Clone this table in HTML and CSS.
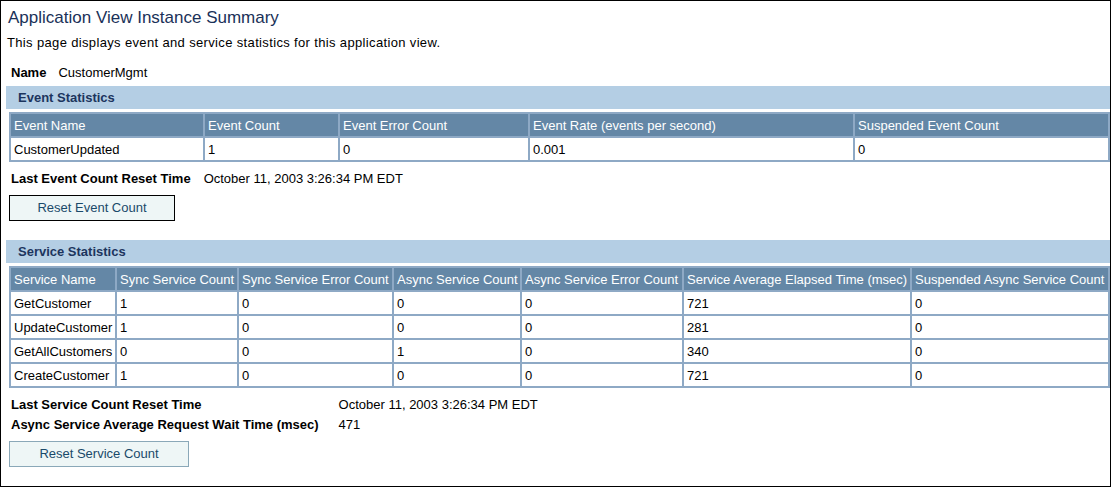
FILE: index.html
```html
<!DOCTYPE html>
<html lang="en">
<head>
<meta charset="utf-8">
<title>Application View Instance Summary</title>
<link rel="stylesheet" href="styles.css">
</head>
<body>
<div class="frame">
  <h1 class="title">Application View Instance Summary</h1>
  <p class="intro">This page displays event and service statistics for this application view.</p>
  <div class="meta name-row">
    <span class="label">Name</span><span class="value">CustomerMgmt</span>
  </div>

  <div class="band">Event Statistics</div>
  <table class="stats">
    <colgroup>
      <col class="c-ev-name"><col class="c-ev-count"><col class="c-ev-err"><col class="c-ev-rate"><col>
    </colgroup>
    <thead>
      <tr><th>Event Name</th><th>Event Count</th><th>Event Error Count</th><th>Event Rate (events per second)</th><th>Suspended Event Count</th></tr>
    </thead>
    <tbody>
      <tr><td>CustomerUpdated</td><td>1</td><td>0</td><td>0.001</td><td>0</td></tr>
    </tbody>
  </table>
  <div class="meta ev-meta">
    <span class="label">Last Event Count Reset Time</span><span class="value">October 11, 2003 3:26:34 PM EDT</span>
  </div>
  <button class="btn btn-default" type="button">Reset Event Count</button>

  <div class="band band-2">Service Statistics</div>
  <table class="stats">
    <colgroup>
      <col class="c-sv-name"><col class="c-sv-sync"><col class="c-sv-syncerr"><col class="c-sv-async"><col class="c-sv-asyncerr"><col class="c-sv-avg"><col>
    </colgroup>
    <thead>
      <tr><th>Service Name</th><th>Sync Service Count</th><th>Sync Service Error Count</th><th>Async Service Count</th><th>Async Service Error Count</th><th>Service Average Elapsed Time (msec)</th><th>Suspended Async Service Count</th></tr>
    </thead>
    <tbody>
      <tr><td>GetCustomer</td><td>1</td><td>0</td><td>0</td><td>0</td><td>721</td><td>0</td></tr>
      <tr><td>UpdateCustomer</td><td>1</td><td>0</td><td>0</td><td>0</td><td>281</td><td>0</td></tr>
      <tr><td>GetAllCustomers</td><td>0</td><td>0</td><td>1</td><td>0</td><td>340</td><td>0</td></tr>
      <tr><td>CreateCustomer</td><td>1</td><td>0</td><td>0</td><td>0</td><td>721</td><td>0</td></tr>
    </tbody>
  </table>
  <div class="meta sv-meta">
    <span class="label">Last Service Count Reset Time</span><span class="value">October 11, 2003 3:26:34 PM EDT</span>
    <span class="label">Async Service Average Request Wait Time (msec)</span><span class="value">471</span>
  </div>
  <button class="btn btn-plain" type="button">Reset Service Count</button>
</div>
</body>
</html>
```
FILE: styles.css
```css
* { box-sizing: border-box; }
html, body { margin: 0; padding: 0; background: #fff; }
body {
  font-family: "Liberation Sans", Arial, sans-serif;
  font-size: 13px;
  color: #000;
}
.frame {
  width: 1111px;
  height: 487px;
  border: 1px solid #000;
  padding: 7px 0 0 5px;
  display: flex;
  flex-direction: column;
  align-items: flex-start;
}
.title {
  margin: 0;
  padding-left: 2px;
  font-size: 17px;
  line-height: 20px;
  font-weight: normal;
  color: #1a3158;
}
.intro {
  margin: 5px 0 0;
  padding-left: 1px;
  line-height: 20px;
  font-size: 13px;
  letter-spacing: 0.35px;
}
.meta {
  display: grid;
  grid-template-columns: auto auto;
  column-gap: 13px;
  padding-left: 5px;
  line-height: 20px;
  font-size: 13px;
}
.meta .label { font-weight: bold; }
.name-row { margin-top: 10px; column-gap: 12px; }
.band {
  align-self: stretch;
  margin-top: 3px;
  height: 23px;
  line-height: 23px;
  padding-left: 12px;
  background: #b4cee4;
  color: #1c355e;
  font-weight: bold;
  font-size: 13px;
}
.band-2 { margin-top: 19px; }
.stats {
  margin: 3px 0 0 3px;
  width: 1101px;
  table-layout: fixed;
  border-collapse: separate;
  border-spacing: 2px;
  background: #8ea9c5;
}
.stats th, .stats td {
  height: 22px;
  padding: 0 3px;
  text-align: left;
  font-weight: normal;
  white-space: nowrap;
  overflow: hidden;
  font-size: 13px;
}
.stats th { background: #6487a6; color: #fff; }
.stats td { background: #fff; color: #000; }
.c-ev-name { width: 192px; }
.c-ev-count { width: 133px; }
.c-ev-err { width: 188px; }
.c-ev-rate { width: 323px; }
.c-sv-name { width: 104px; }
.c-sv-sync { width: 120px; }
.c-sv-syncerr { width: 153px; }
.c-sv-async { width: 126px; }
.c-sv-asyncerr { width: 160px; }
.c-sv-avg { width: 226px; }
.ev-meta { margin-top: 7px; }
.sv-meta { margin-top: 7px; column-gap: 20px; }
.btn {
  margin: 6px 0 0 3px;
  height: 26px;
  background: #eef6f6;
  color: #1a4a6a;
  font-family: "Liberation Sans", Arial, sans-serif;
  font-size: 13px;
  padding: 0 0 2px;
  border-radius: 0;
}
.btn-default { width: 166px; border: 1px solid #000; }
.btn-plain { width: 180px; border: 1px solid #8aa8b8; }
```
